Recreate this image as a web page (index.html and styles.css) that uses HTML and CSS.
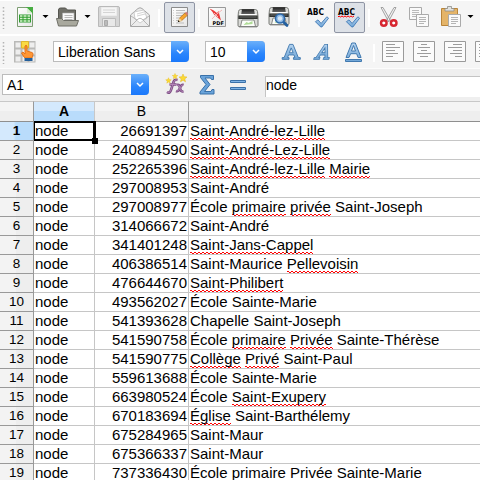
FILE: index.html
```html
<!DOCTYPE html>
<html lang="en">
<head>
<meta charset="utf-8">
<title>Spreadsheet</title>
<link rel="stylesheet" href="styles.css">
</head>
<body>
<svg class="defs" width="0" height="0">
  <defs>
    <linearGradient id="blue" x1="0" y1="0" x2="0" y2="1"><stop offset="0" stop-color="#b5d3ef"/><stop offset="1" stop-color="#6fa5d6"/></linearGradient>
    <linearGradient id="paper" x1="0" y1="0" x2="1" y2="1"><stop offset="0" stop-color="#fff"/><stop offset="1" stop-color="#e6e6e6"/></linearGradient>
    <linearGradient id="dark" x1="0" y1="0" x2="0" y2="1"><stop offset="0" stop-color="#222"/><stop offset="1" stop-color="#666"/></linearGradient>
    <g id="printer">
      <path d="M3 .500h15q1.500 0 2 2l.5 5v9q0 1-1 1h-18q-1 0-1-1v-9l.5-5q.3-2 2-2z" fill="#d9dad7" stroke="#6b6d69" stroke-width=".9"/>
      <path d="M4.500.3h12l.8 5h-13.600z" fill="url(#dark)"/>
      <path d="M2 5.500h17" stroke="#fff" stroke-width="1"/>
      <path d="M.8 6.500h19.400v3.500H.8z" fill="#30322f"/>
      <path d="M2 8h17" stroke="#777" stroke-width=".8"/>
      <path d="M4.500 11h12l1.500 6.500H3z" fill="#fbfdf9" stroke="#6d6f6b" stroke-width=".8"/>
      <path d="M6 16l3-3 2 1 4-2v3z" fill="#b0dc97"/>
      <path d="M1.500 18h18" stroke="#888" stroke-width=".8"/>
    </g>
    <path id="letter" d="M1 18v-2h2L8.500 1h3.500l5.500 15h2v2h-7v-2h1.500l-1-3H7.500l-1 3H8v2zM8.300 10.500h3.900l-2-5.500z"/>
    <path id="check" d="M1 7l3-2 3.500 4L14 1.500l2 1.500L8.500 13H7z" fill="url(#blue)" stroke="#3d78b5" stroke-width="1"/>
    <path id="star" d="M0-4l1.200 2.700 2.800.3-2.200 1.900.7 2.900L0 2.300l-2.500 1.500.7-2.900L-4-1l2.800-.3z"/>
  </defs>
</svg>
<div class="window">
  <div class="toolbar standard">
    <svg width="40" height="34" viewBox="0 1 40 34">
      <path d="M3.500 7v22" stroke="#b4b4b4" stroke-width="1.500" stroke-dasharray="1.500 2"/>
      <path d="M17.500 7.500h10l5 5v14h-15z" fill="url(#paper)" stroke="#7d9d72"/>
      <path d="M26 7h7v7z" fill="#48ad42"/><path d="M27 8v5h5z" fill="#d8f0d2"/>
      <path d="M19 14.500h12v8H19z" fill="#2f9d30"/>
      <path d="M20 16h2.500M23.500 16h3M27.500 16h2.500M20 18.500h2.500M23.500 18.500h3M27.500 18.500h2.500M20 21h2.500M23.500 21h3M27.500 21h2.500" stroke="#d9f4ce" stroke-width="1.500"/>
    </svg>
    <svg width="56" height="34" viewBox="40 1 56 34">
      <path d="M42.500 15h6L45.500 18z"/>
      <path d="M58.500 21V10q0-2 2-2h5l2 2h8v11z" fill="#71716a" stroke="#55554f"/>
      <path d="M62.500 13h11.500v10H62.500z" fill="#fafafa" stroke="#aaa" stroke-width=".6"/>
      <path d="M64.500 15.500h8M64.500 17.500h8M64.500 19.500h8" stroke="#aaa" stroke-width=".8"/>
      <path d="M56.500 18.500h5l2 2h15l-2 5.500h-18z" fill="#a9a99e" stroke="#6e6e66"/>
      <path d="M84.500 15h6L87.500 18z"/>
    </svg>
    <svg width="62" height="34" viewBox="96 1 62 34">
      <path d="M98.500 8q0-1.500 1.500-1.500h18q1.500 0 1.500 1.500v18.500h-21z" fill="#d6d6d6" stroke="#b9b9b9"/>
      <path d="M101.500 7.500h15v8h-15z" fill="#f5f5f5" stroke="#ececec"/><path d="M103 10h12M103 12.500h12" stroke="#d4d4d4"/>
      <path d="M102.500 18.500h13v8h-13z" fill="#e8e8e8" stroke="#bcbcbc"/><path d="M104.500 20.500h3v5h-3z" fill="#bbb" stroke="#aaa"/>
      <path d="M130.500 15L138 8.500q2-1.500 4 0l7.500 6.500v11.500h-19z" fill="#ececec" stroke="#a5a5a5"/>
      <path d="M134 12l10-2 3 8-7 5-5-4z" fill="#fff" stroke="#c4c4c4" stroke-width=".8"/><path d="M137 14l7-2M137 16l8-2" stroke="#d4d4d4"/>
      <path d="M131 26l7-7q2-1.500 4 0l7 7M131 16l6 4M149 16l-6 4" fill="none" stroke="#a8a8a8" stroke-width=".8"/>
    </svg>
    <i class="split"></i>
    <span class="tool pressed edit">
      <svg width="30" height="30" viewBox="164 2 30 30">
        <path d="M171.500 7.500h16v19h-16z" fill="url(#paper)" stroke="#8b8b8b"/>
        <path d="M176 10.500h9M176 13h9M176 15.500h9M176 18h6M176 20.500h4M176 23h8" stroke="#bdbdbd"/>
        <path d="M173.500 10v14" stroke="#ccc" stroke-dasharray="1 1.500"/>
        <path d="M178.500 21.500l1.300-3.700 5.200-4.800 2.200 2.500-5.400 5z" fill="#f7a52d" stroke="#a96a1b" stroke-width=".7"/><path d="M178 22l1.500-4 2.500 3z" fill="#ebd3a4"/><path d="M185 12.500l1.300-.7 2 2.300-1.300 1.200z" fill="#d67872"/><path d="M177.700 22.300l2-.8-1.200-1.200z"/>
      </svg>
    </span>
    <i class="split before-pdf"></i>
    <svg width="99" height="34" viewBox="200 1 99 34">
      <path d="M209.500 7.500h17v19h-17z" fill="url(#paper)" stroke="#999"/>
      <path d="M210.500 8.500q4 1 7.500 4.500l1.500-2 2.500 9.500-7-6q-1.500-3-4.500-6z" fill="#ec3b3b"/><path d="M213 19q4-5 10-9M215 13l4 4" stroke="#f2b5b5" fill="none"/>
      <text class="pdf" x="213.500" y="25" textLength="11.500" lengthAdjust="spacing">PDF</text>
      <use href="#printer" x="238.500" y="9"/>
      <use href="#printer" x="269.500" y="7"/>
      <path d="M284.500 22l3.500 3.500" stroke="#245f9e" stroke-width="2.800" stroke-linecap="round"/>
      <circle cx="281" cy="18.500" r="4.500" fill="#8fb9e4" stroke="#2d68a9" stroke-width="1.600"/><circle cx="281" cy="18.500" r="2.200" fill="#d7e8f7"/>
    </svg>
    <i class="split"></i>
    <svg width="34" height="34" viewBox="301 1 34 34">
      <text class="abc" x="308" y="15" textLength="17" lengthAdjust="spacingAndGlyphs">ABC</text>
      <use href="#check" transform="translate(315.500 15.500) scale(.88)"/>
    </svg>
    <span class="tool pressed spell">
      <svg width="31" height="30" viewBox="335 2 31 30">
        <text class="abc" x="339" y="15" textLength="17" lengthAdjust="spacingAndGlyphs">ABC</text>
        <path d="M339 17l1-1 1.500 1 1.500-1 1.500 1 1.500-1 1.500 1 1.500-1 1.500 1 1.500-1 1.500 1 1.500-1" fill="none" stroke="#f00"/>
        <use href="#check" transform="translate(346.500 15.500) scale(.88)"/>
      </svg>
    </span>
    <i class="split before-cut"></i>
    <svg width="109" height="34" viewBox="371 1 109 34">
      <path d="M382 7.500l2 0 7.500 13-2 1zM397 7.500l-2 0-7.500 13 2 1z" fill="#f3f3f3" stroke="#999" stroke-width=".9"/>
      <ellipse cx="384.800" cy="23" rx="2.800" ry="2.700" fill="#fff" stroke="#d72731" stroke-width="2.400"/><ellipse cx="394.700" cy="23" rx="2.800" ry="2.700" fill="#fff" stroke="#d72731" stroke-width="2.400"/>
      <path d="M410.500 7.500h12v12h-12z" fill="#fafafa" stroke="#aaa"/><path d="M413 10.500h7M413 12.500h7M413 14.500h7M413 16.500h5" stroke="#bbb"/>
      <path d="M417.500 14.500h12v12h-12z" fill="#fafafa" stroke="#aaa"/><path d="M420 17.500h7M420 19.500h7M420 21.500h7M420 23.500h5" stroke="#b5b5b5"/>
      <path d="M442.500 8.500h16v17h-16z" fill="#e4b468" stroke="#b9853a"/>
      <path d="M446 11V8.500h2.500V6.500h4v2h2.500V11z" fill="#e2e2df" stroke="#8e8e88" stroke-width=".8"/>
      <path d="M449.500 14.500h12v12h-12z" fill="#fafafa" stroke="#aaa"/><path d="M452 17.500h7M452 19.500h7M452 21.500h7M452 23.500h5" stroke="#b5b5b5"/>
      <path d="M468.500 15h6L471.500 18z"/>
    </svg>
  </div>

  <div class="toolbar formatting">
    <svg width="53" height="33" viewBox="0 36 53 33">
      <path d="M3.500 42v22" stroke="#b4b4b4" stroke-width="1.500" stroke-dasharray="1.500 2"/>
      <path d="M14 41h21.500v21.500H14z" fill="#b9b9b7"/>
      <path d="M15.500 42.500h5v5h-5zM29.500 42.500h5v5h-5zM15.500 49.500h5v5h-5zM22.500 49.500h5v5h-5zM29.500 49.500h5v5h-5zM15.500 56.500h5v5h-5zM22.500 56.500h5v5h-5zM29.500 56.500h5v5h-5z" fill="#eee"/>
      <path d="M21.500 41.500h7v6.500h-7z" fill="#fada43" stroke="#dfb72a"/>
      <path d="M24 57l-2.500-4 1.500-1 2 2v-8q1-1.500 2 0v5l5 1.500q1 0 1 2L32 58h-7z" fill="#ff9634" stroke="#e06d15" stroke-width=".9"/>
      <path d="M24.500 58h8v3h-8z" fill="#245f9b"/>
    </svg>
    <div class="combo font-name"><span>Liberation Sans</span><b><svg width="18" height="21"><path d="M6 9l3 3 3-3"/></svg></b></div>
    <div class="combo font-size"><span>10</span><b><svg width="18" height="21"><path d="M6 9l3 3 3-3"/></svg></b></div>
    <svg width="108" height="33" viewBox="265 36 108 33">
      <g fill="url(#blue)" stroke="#4179af" stroke-width="1">
        <use href="#letter" transform="translate(281.200 43.500) scale(.98 .88)"/>
        <use href="#letter" transform="translate(318 43.500) skewX(-18) scale(.82 .88)"/>
        <path d="M346 57.500l5.800-14.500h3.500l5.800 14.500h-3l-1.500-3.800h-6L349 57.500zM351.500 51h4l-2-5.500zM345.500 59.500h16v2h-16z"/>
      </g>
    </svg>
    <i class="split"></i>
    <svg width="105" height="33" viewBox="375 36 105 33">
      <g fill="#fbfbfb" stroke="#9a9a9a"><path d="M382.500 41.500h21v20h-21zM413.500 41.500h21v20h-21zM444.500 41.500h21v20h-21zM475.500 41.500h21v20h-21z"/></g>
      <g stroke="#9b9b9b"><path d="M386 44.500h9M386 47.500h14M386 50.500h9M386 53.500h12M386 56.500h7M421 44.500h6M418 47.500h12M421 50.500h6M417 53.500h14M420 56.500h8M453 44.500h9M448 47.500h14M453 50.500h9M450 53.500h12M455 56.500h7M479 44.500h9M479 47.500h9M479 50.500h9M479 53.500h9M479 56.500h9"/></g>
    </svg>
  </div>

  <div class="formula-bar">
    <div class="combo cell-name"><span>A1</span><b><svg width="18" height="21"><path d="M6 9l3 3 3-3"/></svg></b></div>
    <svg width="116" height="32" viewBox="149 69 116 32">
      <path d="M167 92q3 2 4-2l2.500-8q1-3 4-2M169.500 84.500h7M177 85q2.500-1 3 3t3.500 3.500M183.500 85q-2-1-3.500 3t-4 3" fill="none" stroke="#7c4c83" stroke-width="2.600"/>
      <path d="M167 92q3 2 4-2l2.500-8q1-3 4-2M169.500 84.500h7M177 85q2.500-1 3 3t3.500 3.500M183.500 85q-2-1-3.500 3t-4 3" fill="none" stroke="#b78abb" stroke-width=".9"/>
      <g fill="#fbd936" stroke="#e2b71d" stroke-width=".5"><use href="#star" x="183" y="78"/><use href="#star" transform="translate(175 76.200) scale(.7)"/><use href="#star" transform="translate(168.500 80.500) scale(.7)"/></g>
      <path d="M200.500 75.500h13v4h-2l-1-1.500h-5.500l5 6.500-5.500 7h6.500l1-2h2v4.500h-14V92l6-7.500-5.500-7z" fill="#69a3da" stroke="#3970a8"/>
      <path d="M230.500 80.500h15v2h-15zM230.500 87.500h15v2h-15z" fill="#7fb2e3" stroke="#3970a8"/>
    </svg>
    <div class="input-line">node</div>
  </div>

  <table class="sheet">
    <colgroup><col class="c-row"><col class="c-a"><col class="c-b"><col></colgroup>
    <thead><tr><th></th><th class="selected">A</th><th>B</th><th></th></tr></thead>
    <tbody>
      <tr><th class="selected">1</th><td class="cursor">node</td><td>26691397</td><td><u>Saint-André-lez-Lille</u></td></tr>
      <tr><th>2</th><td>node</td><td>240894590</td><td><u>Saint-André-Lez-Lille</u></td></tr>
      <tr><th>3</th><td>node</td><td>252265396</td><td><u>Saint-André-lez-Lille</u> <u>Mairie</u></td></tr>
      <tr><th>4</th><td>node</td><td>297008953</td><td>Saint-André</td></tr>
      <tr><th>5</th><td>node</td><td>297008977</td><td>École <u>primaire</u> <u>privée</u> Saint-Joseph</td></tr>
      <tr><th>6</th><td>node</td><td>314066672</td><td>Saint-André</td></tr>
      <tr><th>7</th><td>node</td><td>341401248</td><td><u>Saint-Jans-Cappel</u></td></tr>
      <tr><th>8</th><td>node</td><td>406386514</td><td>Saint-Maurice <u>Pellevoisin</u></td></tr>
      <tr><th>9</th><td>node</td><td>476644670</td><td><u>Saint-Philibert</u></td></tr>
      <tr><th>10</th><td>node</td><td>493562027</td><td>École Sainte-Marie</td></tr>
      <tr><th>11</th><td>node</td><td>541393628</td><td>Chapelle Saint-Joseph</td></tr>
      <tr><th>12</th><td>node</td><td>541590758</td><td>École <u>primaire</u> <u>Privée</u> Sainte-Thérèse</td></tr>
      <tr><th>13</th><td>node</td><td>541590775</td><td><u>Collège</u> <u>Privé</u> Saint-Paul</td></tr>
      <tr><th>14</th><td>node</td><td>559613688</td><td>École Sainte-Marie</td></tr>
      <tr><th>15</th><td>node</td><td>663980524</td><td>École <u>Saint-Exupery</u></td></tr>
      <tr><th>16</th><td>node</td><td>670183694</td><td><u>Église</u> Saint-Barthélemy</td></tr>
      <tr><th>17</th><td>node</td><td>675284965</td><td>Saint-Maur</td></tr>
      <tr><th>18</th><td>node</td><td>675366337</td><td>Saint-Maur</td></tr>
      <tr><th>19</th><td>node</td><td>737336430</td><td>École <u>primaire</u> <u>Privée</u> Sainte-Marie</td></tr>
    </tbody>
  </table>
</div>
</body>
</html>
```
FILE: styles.css
```css
* { box-sizing: border-box; }
body { margin: 0; font-family: "Liberation Sans", Arial, sans-serif; color: #000; background: #fff; }
.defs { position: absolute; }
.window { width: 480px; height: 480px; overflow: hidden; }
.window svg { display: block; flex: none; }

.toolbar { display: flex; background: #f5f5f5; overflow: hidden; }
.standard { height: 36px; border-top: 1px solid #fff; border-bottom: 2px solid #fff; }
.formatting { height: 33px; border-bottom: 1px solid #fcfcfc; }
.split { flex: none; width: 2px; height: 18px; margin-top: 8px; background: #fff; }
.tool { flex: none; height: 31px; margin-top: 1px; border: 1px solid #8f95a4; border-radius: 2px; background: #dde1e7; overflow: hidden; }
.tool svg { margin: -1px; }
.edit { width: 31px; margin-left: 4px; }
.spell { width: 31px; }
.before-pdf { margin-left: 3px; margin-right: -1px; }
.before-cut { margin-left: 3px; }
.abc { font: bold 8px "DejaVu Sans", sans-serif; }
.pdf { font: bold 5px "DejaVu Sans", sans-serif; }

.combo { display: flex; flex: none; height: 21px; font-size: 14px; line-height: 20px; background: #fff; border: 1px solid #bcbcbc; border-right: 0; border-radius: 0 4px 4px 0; }
.combo span { flex: 1; padding-left: 4px; white-space: nowrap; }
.combo b { width: 18px; margin: -1px 0; border-radius: 0 4px 4px 0; background: linear-gradient(#6bb0fa, #2a85fc 60%, #1a78fb); }
.combo path { fill: none; stroke: #fff; stroke-width: 1.5; }
.font-name { width: 136px; margin-top: 5px; }
.font-size { width: 60px; margin: 5px 0 0 16px; }
.cell-name { width: 147px; margin: 5px 0 0 2px; }

.formula-bar { display: flex; height: 32px; background: #efefef; }
.input-line { flex: 1; height: 21px; margin-top: 7px; background: #fff; border: 1px solid #c4c4c4; border-right: 0; border-bottom: 0; font-size: 14px; line-height: 17px; }

.sheet { width: 480px; table-layout: fixed; border-collapse: separate; border-spacing: 0; }
.c-row { width: 34px; }
.c-a { width: 61px; }
.c-b { width: 94px; }
.sheet th, .sheet td { height: 19px; padding: 0; white-space: nowrap; vertical-align: top; }
.sheet th { font-size: 14px; font-weight: normal; }
.sheet thead th { height: 20px; line-height: 19px; border-top: 1px solid #c8c8c8; border-right: 1px solid #999; border-bottom: 1px solid #8f8f8f; background: linear-gradient(#f4f4f4 50%, #eee 50%); }
.sheet thead th:nth-child(2) { border-right-color: #c8c8c8; }
.sheet thead th:last-child { border-right: 0; }
.sheet thead th.selected { font-weight: bold; background: linear-gradient(#d4e9fd 45%, #b9dcfb 50%); }
.sheet tbody th { font-size: 13.5px; line-height: 18px; border-right: 1px solid #999; border-bottom: 1px solid #999; background: linear-gradient(90deg, #f3f3f3 50%, #eee 50%); }
.sheet tbody th.selected { font-weight: bold; background: linear-gradient(90deg, #d4e9fd 42%, #b9dcfb 48%); }
.sheet td { font-size: 15px; line-height: 18px; padding-left: 1px; border-right: 1px solid #c6c6c6; border-bottom: 1px solid #c6c6c6; }
.sheet td:nth-child(3) { text-align: right; padding-right: 1px; }
.sheet td:last-child { border-right: 0; }
.sheet u {
  display: inline-block;
  height: 18px;
  text-decoration: none;
  background:
    linear-gradient(90deg, #f00 50%, transparent 50%) 0 16px / 4px 1px repeat-x,
    linear-gradient(90deg, transparent 50%, #f00 50%) 0 17px / 4px 1px repeat-x;
}
.sheet td.cursor { position: relative; }
.cursor::before { content: ""; position: absolute; inset: -1px -2px -1px 0; border: 2px solid #000; border-left-width: 1px; border-right-width: 3px; }
.cursor::after { content: ""; position: absolute; right: -4px; bottom: -4px; width: 6px; height: 6px; background: #000; }
```
